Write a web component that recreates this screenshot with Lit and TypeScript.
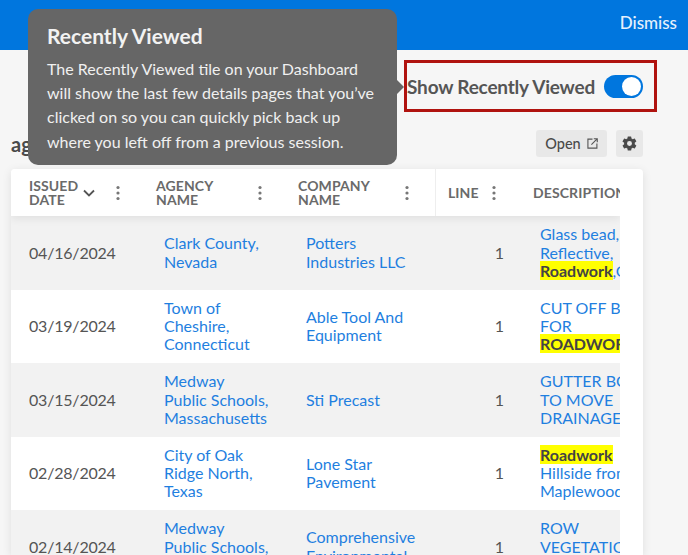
import { LitElement, html, css } from "lit";
import { customElement } from "lit/decorators.js";

interface Row { date: string; agency: string[]; company: string[]; desc: unknown[]; }

const hl = (t: string) => html`<mark>${t}</mark>`;

const rows: Row[] = [
  { date: "04/16/2024", agency: ["Clark County,", "Nevada"], company: ["Potters", "Industries LLC"], desc: [html`Glass bead,`, html`Reflective,`, html`${hl("Roadwork")},Glass`] },
  { date: "03/19/2024", agency: ["Town of", "Cheshire,", "Connecticut"], company: ["Able Tool And", "Equipment"], desc: [html`CUT OFF BLADE`, html`FOR`, html`${hl("ROADWORK")}`] },
  { date: "03/15/2024", agency: ["Medway", "Public Schools,", "Massachusetts"], company: ["Sti Precast"], desc: [html`GUTTER BOX`, html`TO MOVE`, html`DRAINAGE`] },
  { date: "02/28/2024", agency: ["City of Oak", "Ridge North,", "Texas"], company: ["Lone Star", "Pavement"], desc: [html`${hl("Roadwork")}`, html`Hillside from`, html`Maplewood`] },
  { date: "02/14/2024", agency: ["Medway", "Public Schools,", "Massachusetts"], company: ["Comprehensive", "Environmental"], desc: [html`ROW`, html`VEGETATION`, html`CONTROL`] },
];

const dots = (cls: string) => html`<svg class="dots ${cls}" viewBox="0 0 4 16" width="4" height="16" aria-hidden="true"><circle cx="2" cy="2.5" r="1.6"/><circle cx="2" cy="8" r="1.6"/><circle cx="2" cy="13.5" r="1.6"/></svg>`;

@customElement("app-root")
export class AppRoot extends LitElement {
  static styles = css`
    :host { display: block; width: 688px; height: 555px; overflow: hidden; position: relative; background: #f6f6f6; font-family: Lato, "Open Sans", sans-serif; color: #4a4a4a; }
    .topbar { height: 50px; background: #0076de; display: flex; justify-content: flex-end; align-items: flex-start; padding: 13px 11px 0 0; box-sizing: border-box; color: #e6f1fc; font-size: 17px; line-height: 20px; font-weight: 500; }
    .toggle-row { display: flex; justify-content: flex-end; padding: 10px 31px 0 0; }
    .toggle-box { display: flex; align-items: center; justify-content: flex-end; gap: 9px; width: 253px; height: 52px; box-sizing: border-box; border: 3px solid #b0130f; padding: 0 11px 0 0; font-size: 19px; letter-spacing: -.2px; font-weight: 700; color: #555; white-space: nowrap; }
    .switch { width: 39px; height: 23px; border-radius: 12px; background: #0076de; position: relative; flex: none; }
    .switch::after { content: ""; position: absolute; right: 2px; top: 2px; width: 19px; height: 19px; border-radius: 50%; background: #fff; }
    .toolbar { display: flex; align-items: center; height: 27px; margin: 18px 45px 12px 11px; gap: 9px; }
    .title { flex: 1; font-size: 20px; font-weight: 700; color: #4a4a4a; }
    .btn { height: 27px; box-sizing: border-box; background: #e8e8e8; border-radius: 3px; display: flex; align-items: center; justify-content: center; color: #4a4a4a; font-size: 14.5px; font-weight: 500; }
    .btn.open { width: 71px; gap: 6px; }
    .btn.gear { width: 27px; }
    .card { margin: 0 45px 0 11px; background: #fff; border-radius: 4px 4px 0 0; box-shadow: 0 2px 10px rgba(0,0,0,.1); height: 386px; overflow: hidden; }
    .table { width: 609px; overflow: hidden; height: 386px; }
    .row { display: grid; grid-template-columns: 127px 142px 155px 80px 105px; }
    .head { height: 47px; background: #fff; box-shadow: 0 3px 8px rgba(0,0,0,.07); position: relative; font-size: 14px; line-height: 14px; font-weight: 700; color: #6a6a6a; letter-spacing: .1px; }
    .hc { display: flex; align-items: center; padding-left: 18px; position: relative; white-space: nowrap; overflow: hidden; }
    .hc.line { padding-left: 12px; border-left: 1px solid #eee; }
    .hc .lbl { flex: none; }
    .chev { margin-left: 5px; flex: none; }
    .dots { fill: #777; flex: none; }
    .d1 { margin-left: 21px; }
    .d2 { margin-left: 45px; }
    .d3 { margin-left: 35px; }
    .d4 { margin-left: 13px; }
    .body-row { height: 73.5px; font-size: 16px; line-height: 18.4px; background: #fff; }
    .body-row:nth-child(even) { background: #f2f2f2; }
    .cell { display: flex; align-items: center; overflow: hidden; white-space: nowrap; }
    .date { padding-left: 18px; color: #555; font-size: 16px; letter-spacing: -.2px; }
    .link { padding-left: 26px; color: #1f7fe0; }
    .num { justify-content: flex-end; padding-right: 11px; color: #555; }
    .desc { padding-left: 25px; color: #1f7fe0; }
    .lines div { height: 18.4px; }
    mark { background: #ffff00; color: #444; font-weight: 700; }
    .tip { position: absolute; left: 28px; top: 9px; width: 369px; height: 156px; box-sizing: border-box; padding: 13px 19px 0; background: #666; border-radius: 10px; color: #f0f0f0; }
    .tip::after { content: ""; position: absolute; right: -7px; top: 71px; width: 0; height: 0; border-style: solid; border-width: 7px 0 7px 7px; border-color: transparent transparent transparent #666; }
    .tip h3 { margin: 0 0 7px; font-size: 21px; line-height: 28px; font-weight: 700; color: #f2f2f2; }
    .tip p { margin: 0; font-size: 16px; line-height: 24.2px; white-space: nowrap; }
  `;

  render() {
    return html`
      <div class="topbar">Dismiss</div>
      <div class="toggle-row">
        <div class="toggle-box">Show Recently Viewed<span class="switch"></span></div>
      </div>
      <div class="toolbar">
        <div class="title">ag</div>
        <div class="btn open">Open
          <svg width="11" height="11" viewBox="0 0 12 12" fill="none" stroke="#555" stroke-width="1.2"><path d="M6 1.2H1v9.8h9.8V6"/><path d="M4.8 7.2 11 1M7.4 .8H11.2V4.6"/></svg>
        </div>
        <div class="btn gear">
          <svg width="17" height="17" viewBox="0 0 24 24" fill="#4a4a4a"><path d="M19.4 13c.04-.33.06-.66.06-1s-.02-.67-.06-1l2.1-1.65a.5.5 0 0 0 .12-.64l-2-3.46a.5.5 0 0 0-.6-.22l-2.49 1a7.3 7.3 0 0 0-1.73-1l-.38-2.65A.5.5 0 0 0 13.93 2h-4a.5.5 0 0 0-.49.42l-.38 2.65c-.62.25-1.2.59-1.73 1l-2.49-1a.5.5 0 0 0-.6.22l-2 3.46a.5.5 0 0 0 .12.64L4.46 11c-.04.33-.07.66-.07 1s.03.67.07 1l-2.1 1.65a.5.5 0 0 0-.12.64l2 3.46c.12.22.38.3.6.22l2.49-1c.53.41 1.11.75 1.73 1l.38 2.65c.04.24.25.42.49.42h4c.25 0 .45-.18.49-.42l.38-2.65c.62-.25 1.2-.59 1.73-1l2.49 1c.22.08.48 0 .6-.22l2-3.46a.5.5 0 0 0-.12-.64L19.4 13ZM12 15.5a3.5 3.5 0 1 1 0-7 3.5 3.5 0 0 1 0 7Z"/></svg>
        </div>
      </div>
      <div class="card">
        <div class="table">
          <div class="row head">
            <div class="hc"><span class="lbl">ISSUED<br />DATE</span>
              <svg class="chev" width="12" height="8" viewBox="0 0 12 8" fill="none" stroke="#555" stroke-width="1.8"><path d="M1 1.5 6 6.5 11 1.5"/></svg>
              ${dots("d1")}</div>
            <div class="hc"><span class="lbl">AGENCY<br />NAME</span>${dots("d2")}</div>
            <div class="hc"><span class="lbl">COMPANY<br />NAME</span>${dots("d3")}</div>
            <div class="hc line"><span class="lbl">LINE</span>${dots("d4")}</div>
            <div class="hc"><span class="lbl">DESCRIPTION</span></div>
          </div>
          ${rows.map((r) => html`
            <div class="row body-row">
              <div class="cell date">${r.date}</div>
              <div class="cell link"><div class="lines">${r.agency.map((l) => html`<div>${l}</div>`)}</div></div>
              <div class="cell link"><div class="lines">${r.company.map((l) => html`<div>${l}</div>`)}</div></div>
              <div class="cell num">1</div>
              <div class="cell desc"><div class="lines">${r.desc.map((l) => html`<div>${l}</div>`)}</div></div>
            </div>`)}
        </div>
      </div>
      <div class="tip">
        <h3>Recently Viewed</h3>
        <p>The Recently Viewed tile on your Dashboard<br />will show the last few details pages that you’ve<br />clicked on so you can quickly pick back up<br />where you left off from a previous session.</p>
      </div>
    `;
  }
}
